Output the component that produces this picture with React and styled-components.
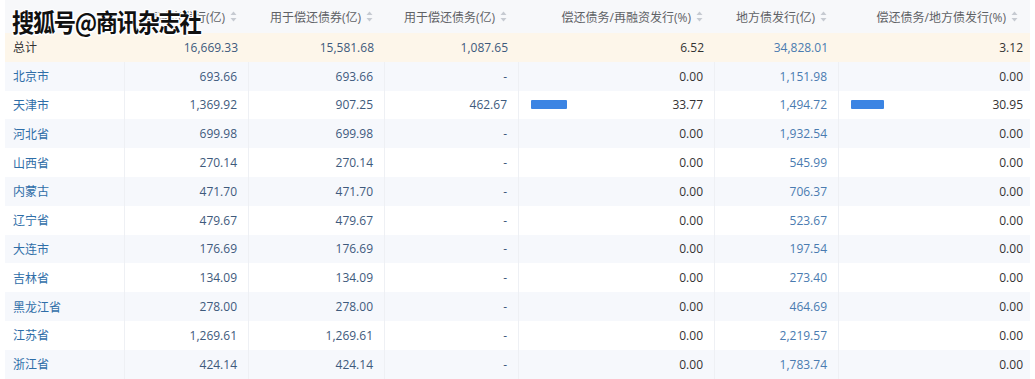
import React from "react";
import styled, { createGlobalStyle } from "styled-components";

const GlobalStyle = createGlobalStyle`
  html, body { margin: 0; padding: 0; background: #ffffff; }
  body {
    font-family: "Open Sans", "Noto Sans CJK SC", sans-serif;
    font-size: 12px;
    color: #333;
  }
`;

const COLS = "120px 124px 136px 134px 196px 124px 191px";

const Page = styled.div`
  position: relative;
  width: 1035px;
  height: 379px;
  overflow: hidden;
  padding: 0 5px;
  box-sizing: border-box;
  background: #fff;
`;

const Table = styled.div`
  display: flex;
  flex-direction: column;
`;

const HeaderRow = styled.div`
  display: grid;
  grid-template-columns: ${COLS};
  height: 33px;
  background: #f7f8fa;
`;

const HeadCell = styled.div`
  display: flex;
  align-items: center;
  justify-content: ${(p) => (p.$left ? "flex-start" : "flex-end")};
  gap: 5px;
  padding: 0 12px;
  color: #5f6266;
  white-space: nowrap;
  overflow: hidden;
`;

const Row = styled.div`
  display: grid;
  grid-template-columns: ${COLS};
  height: 28.8px;
  background: ${(p) => (p.$total ? "#fdf6ea" : p.$alt ? "#f6f8fc" : "#ffffff")};
`;

const Cell = styled.div`
  display: flex;
  align-items: center;
  justify-content: ${(p) => (p.$left ? "flex-start" : "flex-end")};
  padding: 0 ${(p) => (p.$last ? "7px" : "11px")} 0 ${(p) => (p.$left ? "8px" : "12px")};
  color: ${(p) => p.$color || "#333"};
  border-right: ${(p) => (p.$border ? "1px solid #eef0f4" : "none")};
  white-space: nowrap;
  position: relative;
`;

const BarCell = styled(Cell)`
  justify-content: space-between;
`;

const Bar = styled.span`
  display: block;
  height: 9px;
  background: #3b84e3;
  border-radius: 1px;
`;

const Watermark = styled.div`
  position: absolute;
  left: 12px;
  top: 6px;
  font-family: "Noto Sans CJK SC", sans-serif;
  font-weight: 700;
  font-size: 25px;
  line-height: 30px;
  letter-spacing: -1.5px;
  color: #111;
  white-space: nowrap;
  transform: scaleX(0.89);
  transform-origin: left center;
  text-shadow:
    1.5px 0 0 #fff, -1.5px 0 0 #fff, 0 1.5px 0 #fff, 0 -1.5px 0 #fff,
    1px 1px 0 #fff, -1px -1px 0 #fff, 1px -1px 0 #fff, -1px 1px 0 #fff;
  pointer-events: none;
`;

const SortIcon = () => (
  <svg width="7" height="11" viewBox="0 0 7 11">
    <path d="M3.5 0.5 L6.5 4 L0.5 4 Z" fill="#c6cad1" />
    <path d="M3.5 10.5 L6.5 7 L0.5 7 Z" fill="#c6cad1" />
  </svg>
);

const headers = [
  "",
  "再融资发行(亿)",
  "用于偿还债券(亿)",
  "用于偿还债务(亿)",
  "偿还债务/再融资发行(%)",
  "地方债发行(亿)",
  "偿还债务/地方债发行(%)",
];

const total = ["总计", "16,669.33", "15,581.68", "1,087.65", "6.52", "34,828.01", "3.12"];

const rows = [
  ["北京市", "693.66", "693.66", "-", "0.00", "1,151.98", "0.00"],
  ["天津市", "1,369.92", "907.25", "462.67", "33.77", "1,494.72", "30.95"],
  ["河北省", "699.98", "699.98", "-", "0.00", "1,932.54", "0.00"],
  ["山西省", "270.14", "270.14", "-", "0.00", "545.99", "0.00"],
  ["内蒙古", "471.70", "471.70", "-", "0.00", "706.37", "0.00"],
  ["辽宁省", "479.67", "479.67", "-", "0.00", "523.67", "0.00"],
  ["大连市", "176.69", "176.69", "-", "0.00", "197.54", "0.00"],
  ["吉林省", "134.09", "134.09", "-", "0.00", "273.40", "0.00"],
  ["黑龙江省", "278.00", "278.00", "-", "0.00", "464.69", "0.00"],
  ["江苏省", "1,269.61", "1,269.61", "-", "0.00", "2,219.57", "0.00"],
  ["浙江省", "424.14", "424.14", "-", "0.00", "1,783.74", "0.00"],
];

const colColor = (i, isTotal) => {
  if (i === 0) return isTotal ? "#333" : "#2f6ea8";
  if (i >= 1 && i <= 3) return "#3e5a7c";
  if (i === 5) return "#4a7bb0";
  return "#333";
};

const renderCells = (r, isTotal) =>
  r.map((v, i) => {
    const props = {
      key: i,
      $left: i === 0,
      $last: i === 6,
      $color: colColor(i, isTotal),
      $border: !isTotal && i < 6,
    };
    if (i === 4 || i === 6) {
      const num = parseFloat(v);
      return (
        <BarCell {...props}>
          {num > 0 && !isTotal ? <Bar style={{ width: `${num * 1.067}px` }} /> : <span />}
          <span>{v}</span>
        </BarCell>
      );
    }
    return <Cell {...props}>{v}</Cell>;
  });

export default function App() {
  return (
    <>
      <GlobalStyle />
      <Page>
        <Table>
          <HeaderRow>
            {headers.map((h, i) => (
              <HeadCell key={i} $left={i === 0}>
                {h && (
                  <>
                    <span>{h}</span>
                    <SortIcon />
                  </>
                )}
              </HeadCell>
            ))}
          </HeaderRow>
          <Row $total>{renderCells(total, true)}</Row>
          {rows.map((r, idx) => (
            <Row key={idx} $alt={idx % 2 === 0}>
              {renderCells(r, false)}
            </Row>
          ))}
        </Table>
        <Watermark>搜狐号@商讯杂志社</Watermark>
      </Page>
    </>
  );
}
